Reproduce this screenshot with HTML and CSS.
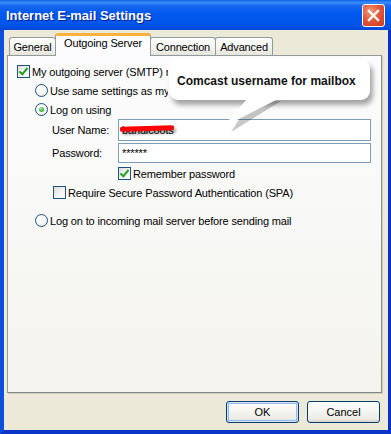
FILE: index.html
```html
<!DOCTYPE html>
<html lang="en">
<head>
    <meta charset="UTF-8">
    <title>Internet E-mail Settings</title>
    <link rel="stylesheet" href="styles.css">
</head>
<body>

    <div class="window">
        <div class="titlebar">
            <span class="title">Internet E-mail Settings</span>
            <span class="close">
                <svg width="21" height="21" viewBox="0 0 21 21">
                    <path d="M6 6 L15 15 M15 6 L6 15" stroke="#fff" stroke-width="2.4" stroke-linecap="square"/>
                </svg>
            </span>
        </div>

        <div class="client">
            <div class="tabs">
                <div class="tab tab-general">General</div>
                <div class="tab active">Outgoing Server</div>
                <div class="tab tab-conn">Connection</div>
                <div class="tab tab-adv">Advanced</div>
            </div>

            <div class="panel">
                <div class="row row-smtp">
                    <span class="check checked"></span>
                    <span class="text clipped">My outgoing server (SMTP) requires authentication</span>
                </div>
                <div class="row row-radio">
                    <span class="radio"></span>
                    <span class="text clipped">Use same settings as my incoming mail server</span>
                </div>
                <div class="row row-radio">
                    <span class="radio selected"></span>
                    <span class="text">Log on using</span>
                </div>
                <div class="field field-user">
                    <span class="label">User Name:</span>
                    <div class="input">
                        bandicoots
                        <span class="scribble"></span>
                    </div>
                </div>
                <div class="field field-pass">
                    <span class="label">Password:</span>
                    <div class="input">******</div>
                </div>
                <div class="row row-remember">
                    <span class="check checked"></span>
                    <span class="text">Remember password</span>
                </div>
                <div class="row row-spa">
                    <span class="check"></span>
                    <span class="text">Require Secure Password Authentication (SPA)</span>
                </div>
                <div class="row row-radio row-incoming">
                    <span class="radio"></span>
                    <span class="text">Log on to incoming mail server before sending mail</span>
                </div>
            </div>

            <div class="buttons">
                <button class="btn default">OK</button>
                <button class="btn">Cancel</button>
            </div>
        </div>

        <div class="callout">
            <svg class="tail" width="80" height="40" viewBox="0 0 80 40">
                <polygon points="50,2 80,2 30,33" fill="rgba(0,0,0,0.22)"/>
                <polygon points="46,0 77,0 22,28" fill="#fff"/>
            </svg>
            <div class="bubble">Comcast username for mailbox</div>
        </div>
    </div>

</body>
</html>
```

FILE: styles.css
```css
body { margin: 0; font-family: "Liberation Sans", Arial, sans-serif; font-size: 11px; color: #000; letter-spacing: -0.15px; }

.window { position: relative; width: 391px; height: 434px; display: flex; flex-direction: column; overflow: hidden; background: #0b48d6; }

.titlebar {
    height: 30px; display: flex; align-items: center; justify-content: space-between;
    padding: 0 6px 0 6px; box-sizing: border-box;
    background: linear-gradient(to bottom, #0a5fe9 0%, #3a8cf5 8%, #1566f0 20%, #0058ee 45%, #0055ea 80%, #0048dc 100%);
}
.title { color: #fff; font-weight: bold; font-size: 13px; letter-spacing: 0; text-shadow: 1px 1px 0 #0a1e8c; padding-top: 1px; }
.close {
    width: 21px; height: 21px; margin-top: 1px; border: 1px solid #fff; border-radius: 3px;
    background: radial-gradient(circle at 35% 30%, #f19a7a 0%, #e2593a 45%, #c8391b 100%);
    display: flex; align-items: center; justify-content: center;
}
.close svg { display: block; }

.client {
    flex: 1; display: flex; flex-direction: column; background: #ece9d8;
    border-left: 4px solid #0b4fdc; border-right: 3px solid #0831c4; border-bottom: 4px solid #0936c8;
    padding: 0 6px 0 3px;
}

.tabs { display: flex; align-items: flex-end; height: 25px; margin-left: 2px; position: relative; z-index: 1; }
.tab {
    height: 18px; box-sizing: border-box; border: 1px solid #919b9c; border-bottom: none;
    border-radius: 3px 3px 0 0; background: linear-gradient(to bottom, #fff 0%, #f3f3ef 60%, #e5e4dc 100%);
    display: flex; align-items: center; justify-content: center;
}
.tab-general { width: 47px; }
.tab-conn { width: 66px; }
.tab-adv { width: 58px; margin-left: -1px; }
.tab.active {
    width: 96px; height: 23px; margin: 0 -1px -1px -1px; background: #fcfcfe;
    border-top: 3px solid #f9b23d; align-items: flex-start; padding-top: 1px;
}

.panel {
    flex: 1; border: 1px solid #919b9c; border-right-color: #8a9192; border-bottom-color: #7f8788;
    background: linear-gradient(to bottom, #fcfcfe 0%, #f8f8f6 50%, #f4f3ee 100%);
    padding-top: 6px; box-shadow: 1px 1px 0 #d0cfc4;
}

.row { height: 19px; display: flex; align-items: center; }
.row-smtp { padding-left: 9px; }
.row-radio { padding-left: 27px; }
.row-remember { padding-left: 110px; margin-top: 1px; }
.row-spa { padding-left: 45px; }
.row-incoming { margin-top: 9px; }
.text { white-space: nowrap; margin-left: 2px; }
.clipped { overflow: hidden; }
.row-smtp .clipped { width: 136px; }
.row-radio .clipped { width: 118px; }

.check {
    width: 13px; height: 13px; box-sizing: border-box; border: 1px solid #1c5180; flex: none;
    background: linear-gradient(135deg, #dcdcd7 0%, #fbfbfa 70%, #fff 100%); position: relative;
}
.check.checked::after {
    content: ""; position: absolute; left: 3px; top: 0px; width: 3px; height: 7px;
    border: solid #21a121; border-width: 0 2px 2px 0; transform: rotate(40deg);
}
.radio {
    width: 13px; height: 13px; box-sizing: border-box; border: 1px solid #1c5180; border-radius: 50%; flex: none;
    background: radial-gradient(circle at 40% 40%, #fff 30%, #e0e0dc 100%); position: relative;
}
.radio.selected::after {
    content: ""; position: absolute; left: 3px; top: 3px; width: 5px; height: 5px; border-radius: 50%;
    background: radial-gradient(circle at 40% 35%, #a8eea0 0%, #3cb23c 60%, #21a121 100%);
}

.field { display: flex; align-items: center; padding-left: 44px; }
.field-user { height: 22px; }
.field-pass { height: 20px; margin-top: 2px; }
.label { width: 66px; flex: none; }
.input {
    width: 253px; height: 100%; box-sizing: border-box; border: 1px solid #7f9db9; background: #fff;
    display: flex; align-items: center; padding-left: 3px; position: relative; font-size: 11px;
}
.scribble {
    position: absolute; left: 1px; top: 6px; width: 54px; height: 5px; background: #ff0000;
    border-radius: 2px; transform: rotate(-2deg); box-shadow: 2px 3px 3px rgba(0, 0, 0, 0.35);
}

.buttons { display: flex; justify-content: flex-end; gap: 8px; padding: 8px 2px 7px 0; }
.btn {
    width: 73px; height: 22px; font-family: inherit; font-size: 11px; color: #000;
    border: 1px solid #003c74; border-radius: 3px; padding: 0;
    background: linear-gradient(to bottom, #fff 0%, #f4f4f0 50%, #ecebe6 85%, #d6d0c5 100%);
}
.btn.default { box-shadow: inset 0 0 0 1px #cee7ff, inset 0 0 0 2px #98b8ea; }

.callout { position: absolute; left: 169px; top: 59px; }
.bubble {
    position: relative; width: 201px; height: 41px; box-sizing: border-box; background: #fff;
    border-radius: 9px; box-shadow: 3px 5px 5px rgba(0, 0, 0, 0.35);
    font-weight: bold; font-size: 12px; letter-spacing: 0; color: #111; padding: 15px 0 0 8px; white-space: nowrap;
}
.tail { position: absolute; left: 32px; top: 40px; z-index: 1; }
```
